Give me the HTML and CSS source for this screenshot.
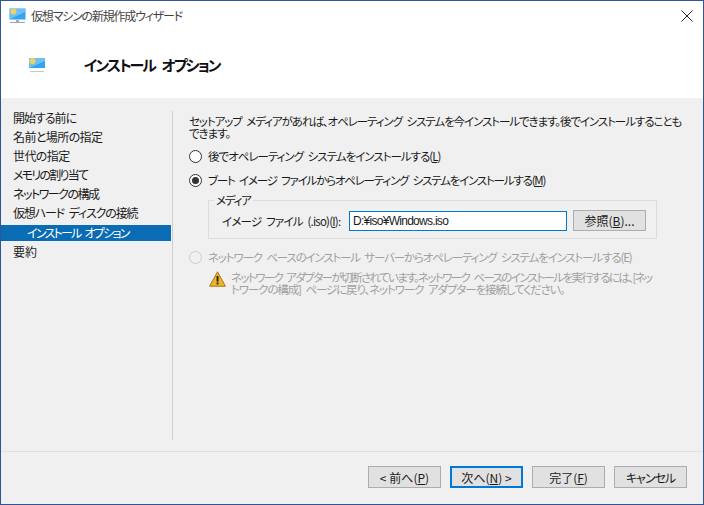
FILE: index.html
```html
<!DOCTYPE html>
<html lang="ja">
<head>
<meta charset="utf-8">
<title>仮想マシンの新規作成ウィザード</title>
<link rel="stylesheet" href="styles.css">
</head>
<body>
<div class="window">
  <div class="titlebar">
    <svg class="icon-title" width="17" height="16" viewBox="0 0 17 16"><rect x="0.5" y="0.5" width="16" height="11" fill="#35a4ee"/><path d="M1 1h15v3L1 11z" fill="#6cc1f4"/><circle cx="4.5" cy="3.5" r="3" fill="#f2cf63"/><rect x="7" y="12" width="3" height="2" fill="#9fb0bd"/><rect x="1" y="14" width="15" height="1" fill="#9aa6ae"/></svg>
    <span class="title">仮想マシンの新規作成ウィザード</span>
    <svg class="close" width="12" height="12" viewBox="0 0 12 12"><path d="M0.5 0.5L11.5 11.5M11.5 0.5L0.5 11.5" stroke="#222" fill="none"/></svg>
  </div>
  <div class="header">
    <svg class="icon-head" width="16" height="15" viewBox="0 0 16 15"><rect width="16" height="10" fill="#35a4ee"/><path d="M0 0h16v3L0 10z" fill="#6cc1f4"/><circle cx="3.5" cy="3" r="3" fill="#f2cf63"/><rect x="1" y="13" width="14" height="1" fill="#c4c8cb"/></svg>
    <h1 class="heading">インストール オプション</h1>
  </div>
  <div class="main">
    <nav class="nav">
      <div class="nav-item ls-10">開始する前に</div>
      <div class="nav-item ls-06">名前と場所の指定</div>
      <div class="nav-item ls-06">世代の指定</div>
      <div class="nav-item ls-17">メモリの割り当て</div>
      <div class="nav-item ls-15">ネットワークの構成</div>
      <div class="nav-item ls-11">仮想ハード ディスクの接続</div>
      <div class="nav-item selected ls-17">インストール オプション</div>
      <div class="nav-item">要約</div>
    </nav>
    <div class="divider"></div>
    <section class="content">
      <p class="intro"><span class="intro-line">セットアップ メディアがあれば、オペレーティング システムを今インストールできます。後でインストールすることも</span><span class="intro-line">できます。</span></p>
      <div class="radio-row first"><span class="radio"></span><span>後でオペレーティング システムをインストールする(<u>L</u>)</span></div>
      <div class="radio-row second"><span class="radio checked"></span><span>ブート イメージ ファイルからオペレーティング システムをインストールする(<u>M</u>)</span></div>
      <fieldset class="group">
        <legend class="legend">メディア</legend>
        <div class="file-row">
          <label class="file-label">イメージ ファイル (.iso)(<u>I</u>):</label>
          <div class="input">D:¥iso¥Windows.iso</div>
          <div class="button browse">参照(<u>B</u>)...</div>
        </div>
      </fieldset>
      <div class="radio-row third disabled"><span class="radio off"></span><span>ネットワーク ベースのインストール サーバーからオペレーティング システムをインストールする(E)</span></div>
      <div class="warning">
        <svg class="warn-icon" width="17" height="16" viewBox="0 0 17 16"><path d="M8.5 0.8L16.4 15.2H0.6z" fill="#f0b429" stroke="#a9741a"/><rect x="7.6" y="5" width="1.9" height="5.6" fill="#222"/><rect x="7.6" y="11.5" width="1.9" height="1.9" fill="#222"/></svg>
        <p class="warn-text"><span class="warn-line one">ネットワーク アダプターが切断されています。ネットワーク ベースのインストールを実行するには、[ネッ</span><span class="warn-line two">トワークの構成] ページに戻り、ネットワーク アダプターを接続してください。</span></p>
      </div>
    </section>
  </div>
  <div class="footer">
    <div class="button">&lt; 前へ(<u>P</u>)</div>
    <div class="button default">次へ(<u>N</u>) &gt;</div>
    <div class="button">完了(<u>F</u>)</div>
    <div class="button cancel">キャンセル</div>
  </div>
</div>
</body>
</html>
```
FILE: styles.css
```css
* { box-sizing: border-box; }
html, body { margin: 0; padding: 0; }
body {
  width: 704px;
  height: 505px;
  overflow: hidden;
  font-family: "Noto Sans CJK JP", "Liberation Sans", sans-serif;
  font-size: 12px;
  font-feature-settings: "palt";
  color: #1a1a1a;
  word-spacing: 3px;
}
.window {
  width: 704px;
  height: 505px;
  display: flex;
  flex-direction: column;
  background: #f0f0f0;
  border: 1px solid #2f5597;
}
.titlebar {
  height: 29px;
  background: #fff;
  display: flex;
  align-items: center;
  padding: 0 10px 0 8px;
  flex: none;
}
.icon-title { margin-right: 5px; }
.title { color: #444; flex: 1; letter-spacing: -1.2px; white-space: nowrap; }
.header {
  height: 68px;
  background: #fff;
  display: flex;
  align-items: center;
  padding: 2px 0 0 28px;
  flex: none;
}
.icon-head { margin-right: 39px; }
.heading {
  margin: 0 0 2px;
  font-size: 15px;
  font-weight: 700;
  color: #111;
  letter-spacing: -1.95px;
  word-spacing: 5px;
  white-space: nowrap;
}
.main { flex: 1; display: flex; padding-top: 10px; min-height: 0; }
.nav { width: 171px; flex: none; }
.divider { width: 1px; height: 329px; margin-top: 3px; background: #d0d0d0; flex: none; }
.nav-item {
  height: 19px;
  line-height: 19px;
  padding-left: 12px;
  width: 170px;
  white-space: nowrap;
}
.ls-06 { letter-spacing: -0.6px; }
.ls-10 { letter-spacing: -1px; }
.ls-11 { letter-spacing: -1.15px; }
.ls-15 { letter-spacing: -1.5px; }
.ls-17 { letter-spacing: -1.75px; }
.nav-item.selected {
  background: #0a6cb4;
  color: #fff;
  padding-left: 26px;
  height: 16px;
  line-height: 16px;
  margin: 3px 0 1px;
}
.content { flex: 1; padding: 7px 0 0 16px; }
.intro { margin: 0; line-height: 12px; white-space: nowrap; font-size: 11.5px; letter-spacing: -1.07px; }
.intro-line { display: block; }
.radio-row {
  display: flex;
  align-items: center;
  height: 14px;
  white-space: nowrap;
  font-size: 11.5px;
}
.radio-row.first { margin-top: 10px; letter-spacing: -1px; }
.radio-row.second { margin-top: 10px; letter-spacing: -1.2px; }
.radio-row.third { margin-top: 11px; letter-spacing: -1.16px; }
.disabled { color: #a0a0a0; }
.radio {
  width: 13px;
  height: 13px;
  border-radius: 50%;
  border: 1px solid #333;
  background: #fff;
  margin-right: 6px;
  flex: none;
  position: relative;
}
.radio.checked::after {
  content: "";
  position: absolute;
  left: 2px;
  top: 2px;
  width: 7px;
  height: 7px;
  border-radius: 50%;
  background: #333;
}
.radio.off { border-color: #ccc; background: #f0f0f0; }
.group {
  margin: 6px 0 0 19px;
  padding: 0 10px 7px 13px;
  width: 449px;
  height: 46px;
  border: 1px solid #dcdcdc;
  min-width: 0;
}
.legend { padding: 0 2px; margin-left: -8px; line-height: 14px; font-size: 11.5px; letter-spacing: -1.2px; }
.file-row { display: flex; align-items: center; height: 21px; margin-top: 3px; white-space: nowrap; }
.file-label { width: 127px; flex: none; font-size: 11.5px; letter-spacing: -0.8px; }
.input {
  width: 218px;
  height: 20px;
  border: 1px solid #0078d7;
  background: #fff;
  line-height: 18px;
  padding-left: 3px;
  font-family: "Liberation Sans", sans-serif;
  letter-spacing: -0.72px;
  flex: none;
}
.button {
  width: 73px;
  height: 22px;
  background: #e1e1e1;
  border: 1px solid #adadad;
  display: flex;
  align-items: center;
  justify-content: center;
  white-space: pre;
  word-spacing: 0;
  flex: none;
}
.browse { margin-left: 6px; height: 21px; }
.default { border: 2px solid #0078d7; }
.cancel { letter-spacing: -1px; }
.warning { display: flex; margin: 7px 0 0 20px; }
.warn-icon { margin-right: 5px; flex: none; }
.warn-text { margin: 0; line-height: 12px; color: #a0a0a0; white-space: nowrap; font-size: 11.5px; }
.warn-line { display: block; }
.warn-line.one { letter-spacing: -1.6px; }
.warn-line.two { letter-spacing: -1.1px; }
.footer {
  height: 53px;
  flex: none;
  border-top: 1px solid #dfdfdf;
  display: flex;
  justify-content: flex-end;
  gap: 9px;
  padding: 14px 16px 0 0;
}
```
